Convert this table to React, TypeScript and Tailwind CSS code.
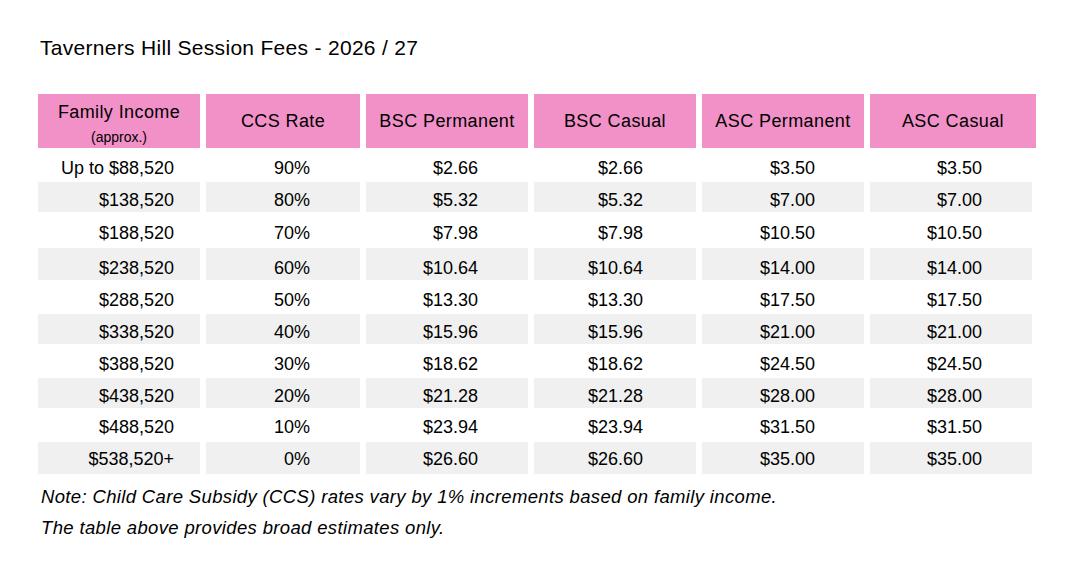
const rows = [
  { income: "Up to $88,520", rate: "90%", bscP: "$2.66", bscC: "$2.66", ascP: "$3.50", ascC: "$3.50", h: "h-[34px]", pt: "pt-[10px]", bg: "bg-white" },
  { income: "$138,520", rate: "80%", bscP: "$5.32", bscC: "$5.32", ascP: "$7.00", ascC: "$7.00", h: "h-[30px]", pt: "pt-[8px]", bg: "bg-[#f0f0f0]" },
  { income: "$188,520", rate: "70%", bscP: "$7.98", bscC: "$7.98", ascP: "$10.50", ascC: "$10.50", h: "h-[36px]", pt: "pt-[10.5px]", bg: "bg-white" },
  { income: "$238,520", rate: "60%", bscP: "$10.64", bscC: "$10.64", ascP: "$14.00", ascC: "$14.00", h: "h-[32px]", pt: "pt-[10px]", bg: "bg-[#f0f0f0]" },
  { income: "$288,520", rate: "50%", bscP: "$13.30", bscC: "$13.30", ascP: "$17.50", ascC: "$17.50", h: "h-[34px]", pt: "pt-[10px]", bg: "bg-white" },
  { income: "$338,520", rate: "40%", bscP: "$15.96", bscC: "$15.96", ascP: "$21.00", ascC: "$21.00", h: "h-[30px]", pt: "pt-[8px]", bg: "bg-[#f0f0f0]" },
  { income: "$388,520", rate: "30%", bscP: "$18.62", bscC: "$18.62", ascP: "$24.50", ascC: "$24.50", h: "h-[34px]", pt: "pt-[10px]", bg: "bg-white" },
  { income: "$438,520", rate: "20%", bscP: "$21.28", bscC: "$21.28", ascP: "$28.00", ascC: "$28.00", h: "h-[30px]", pt: "pt-[8px]", bg: "bg-[#f0f0f0]" },
  { income: "$488,520", rate: "10%", bscP: "$23.94", bscC: "$23.94", ascP: "$31.50", ascC: "$31.50", h: "h-[34px]", pt: "pt-[9px]", bg: "bg-white" },
  { income: "$538,520+", rate: "0%", bscP: "$26.60", bscC: "$26.60", ascP: "$35.00", ascC: "$35.00", h: "h-[32px]", pt: "pt-[7px]", bg: "bg-[#f0f0f0]" },
];

const headers = ["CCS Rate", "BSC Permanent", "BSC Casual", "ASC Permanent"];

const App = () => {
  return (
    <div className="w-[1090px] h-[574px] bg-white text-black font-['Liberation_Sans',Arial,sans-serif]">
      <h1 className="pt-[34px] pl-[40px] text-[21px] leading-[28px] tracking-[0.3px] font-normal">
        Taverners Hill Session Fees - 2026 / 27
      </h1>

      <div className="mt-[32px] ml-[38px]">
        {/* header */}
        <div className="flex gap-[6px] h-[54px] text-[18px] tracking-[0.4px]">
          <div className="w-[162px] bg-[#f291c8] flex flex-col items-center pt-[8px]">
            <span className="leading-[20px]">Family Income</span>
            <span className="mt-[7px] text-[14px] leading-[16px] tracking-normal">(approx.)</span>
          </div>
          {headers.map((h, i) => (
            <div key={h} className={`${i === 0 ? "w-[154px]" : "w-[162px]"} bg-[#f291c8] flex items-center justify-center leading-[20px]`}>
              {h}
            </div>
          ))}
          <div className="w-[166px] bg-[#f291c8] flex items-center justify-center leading-[20px]">ASC Casual</div>
        </div>

        {/* body */}
        {rows.map((r) => (
          <div key={r.income} className={`flex gap-[6px] text-[18px] leading-[20px] ${r.h}`}>
            <div className={`w-[162px] ${r.bg} ${r.pt} text-right pr-[26px]`}>{r.income}</div>
            <div className={`w-[154px] ${r.bg} ${r.pt} text-right pr-[50px]`}>{r.rate}</div>
            <div className={`w-[162px] ${r.bg} ${r.pt} text-right pr-[50px]`}>{r.bscP}</div>
            <div className={`w-[162px] ${r.bg} ${r.pt} text-right pr-[53px]`}>{r.bscC}</div>
            <div className={`w-[162px] ${r.bg} ${r.pt} text-right pr-[49px]`}>{r.ascP}</div>
            <div className={`w-[162px] ${r.bg} ${r.pt} text-right pr-[50px]`}>{r.ascC}</div>
          </div>
        ))}
      </div>

      <div className="mt-[7px] pl-[41px] italic text-[18.5px] leading-[31px] tracking-[0.35px]">
        <p>Note: Child Care Subsidy (CCS) rates vary by 1% increments based on family income.</p>
        <p>The table above provides broad estimates only.</p>
      </div>
    </div>
  );
};

export default App;
